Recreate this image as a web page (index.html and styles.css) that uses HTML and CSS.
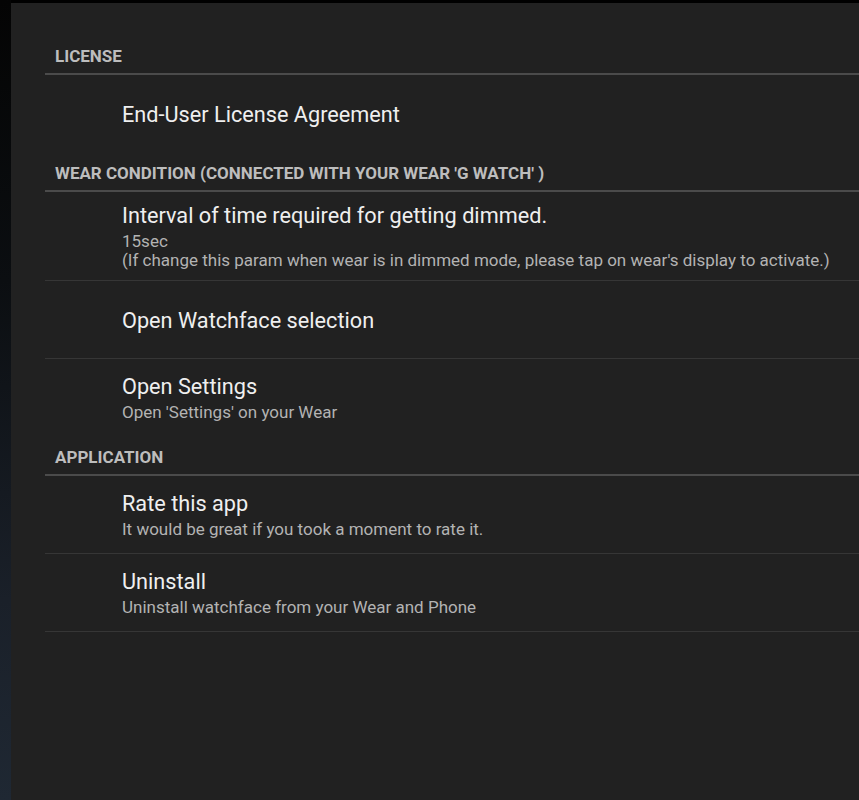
FILE: index.html
```html
<!DOCTYPE html>
<html>
<head>
<meta charset="utf-8">
<link rel="stylesheet" href="styles.css">
</head>
<body>
<div class="screen">
  <div class="edge"></div>
  <div class="panel">
    <div class="list">
      <div class="category">LICENSE</div>
      <div class="pref last single"><div class="title">End-User License Agreement</div></div>

      <div class="category">WEAR CONDITION (CONNECTED WITH YOUR WEAR 'G WATCH' )</div>
      <div class="pref tall">
        <div class="title">Interval of time required for getting dimmed.</div>
        <div class="summary">15sec<br>(If change this param when wear is in dimmed mode, please tap on wear's display to activate.)</div>
      </div>
      <div class="pref single"><div class="title">Open Watchface selection</div></div>
      <div class="pref last">
        <div class="title">Open Settings</div>
        <div class="summary">Open 'Settings' on your Wear</div>
      </div>

      <div class="category">APPLICATION</div>
      <div class="pref">
        <div class="title">Rate this app</div>
        <div class="summary">It would be great if you took a moment to rate it.</div>
      </div>
      <div class="pref">
        <div class="title">Uninstall</div>
        <div class="summary">Uninstall watchface from your Wear and Phone</div>
      </div>
    </div>
  </div>
</div>
</body>
</html>
```

FILE: styles.css
```css
html, body {
  margin: 0;
  padding: 0;
  background: #000;
}
body {
  font-family: Roboto, "Noto Sans", sans-serif;
  width: 859px;
  height: 800px;
  overflow: hidden;
}
.screen {
  display: flex;
  height: 800px;
}
.edge {
  width: 11px;
  flex: none;
  background: linear-gradient(to bottom, #040404 0%, #0b0e11 35%, #1a2029 75%, #1f2833 100%);
}
.panel {
  flex: 1;
  margin-top: 3px;
  background: #212121;
  padding: 32px 0 0 34px;
}
.category {
  height: 27px;
  padding: 11px 0 0 10px;
  line-height: 20px;
  font-size: 17px;
  font-weight: bold;
  color: #bdbdbd;
  border-bottom: 2px solid #4b4b4b;
  white-space: nowrap;
}
.pref {
  height: 78px;
  box-sizing: border-box;
  padding-left: 77px;
  display: flex;
  flex-direction: column;
  justify-content: center;
  border-bottom: 1px solid #363636;
}
.pref.single {
  padding-top: 3px;
}
.pref.tall {
  height: 89px;
}
.pref.last {
  border-bottom: none;
  height: 77px;
}
.title {
  font-size: 21.7px;
  line-height: 28px;
  color: #efefef;
  white-space: nowrap;
}
.summary {
  font-size: 17px;
  line-height: 19px;
  margin-top: 2px;
  color: #b3b3b3;
  white-space: nowrap;
}
```
